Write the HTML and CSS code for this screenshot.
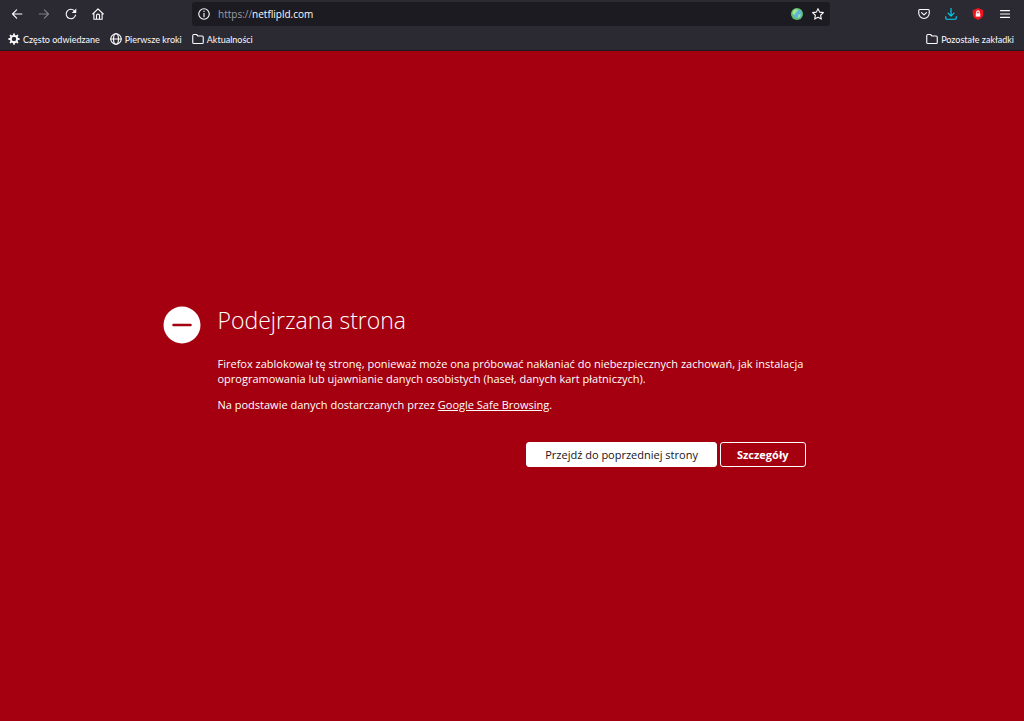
FILE: index.html
```html
<!DOCTYPE html>
<html lang="pl">
<head>
<meta charset="utf-8">
<title>Podejrzana strona</title>
<link rel="stylesheet" href="styles.css">
</head>
<body>
<header class="chrome">
  <div class="toolbar">
    <nav class="tools" aria-label="Nawigacja">
      <button class="tool" aria-label="Wstecz"><svg class="icon" viewBox="0 0 16 16"><path d="M14.500 8H2M7.500 2.500 2 8l5.500 5.500"/></svg></button>
      <button class="tool" aria-label="Do przodu" disabled><svg class="icon" viewBox="0 0 16 16"><path d="M1.500 8H14M8.500 2.500 14 8l-5.500 5.500"/></svg></button>
      <button class="tool" aria-label="Odśwież"><svg class="icon" viewBox="0 0 16 16"><path d="M14 9.500A6.300 6.300 0 1 1 12.300 3.500"/><path class="solid" d="M15 .8v6H9z"/></svg></button>
      <button class="tool" aria-label="Strona startowa"><svg class="icon" viewBox="0 0 16 16"><path d="M1 8 8 1.200 15 8M2.500 7v8h11V7M6 15V9.800q0-1.600 2-1.600t2 1.600V15"/></svg></button>
    </nav>
    <div class="address">
      <svg class="icon" viewBox="0 0 16 16"><circle cx="8" cy="8" r="7"/><path d="M8 7v4.700M8 4v.6"/></svg>
      <div class="url"><span class="scheme">https://</span>netflipld.com</div>
      <svg class="icon globe" viewBox="0 0 16 16"><circle cx="8" cy="8" r="8" fill="#62bf6d"/><circle cx="8.500" cy="8" r="5.800" fill="#5fb4dc"/><path fill="#a5e58e" d="m2.500 4 3-2.500 4 .5-2 3-3 4-2.500-1zM10 9l3-1-1 4-3 1z"/></svg>
      <button class="tool star" aria-label="Dodaj zakładkę"><svg class="icon" viewBox="0 0 16 16"><path d="m8 .9 2.200 4.600 5 .7-3.700 3.500.9 5.100L8 12.300l-4.400 2.500.9-5.100L.8 6.200l5-.7z"/></svg></button>
    </div>
    <div class="tools tools-end">
      <button class="tool" aria-label="Pocket"><svg class="icon" viewBox="0 0 16 16"><path d="M2.300 2h11.400q1.300 0 1.300 1.300V7A7 7 0 0 1 1 7V3.300Q1 2 2.300 2zM4.700 6.200 8 9.200l3.300-3"/></svg></button>
      <button class="tool download" aria-label="Pobrane"><svg class="icon" viewBox="0 0 16 16"><path d="M8 .5v10M4 6.800l4 4 4-4M1 11.500v1.800Q1 15 2.700 15h10.600q1.700 0 1.700-1.700v-1.800"/></svg></button>
      <button class="tool" aria-label="Ochrona"><svg class="icon shield" viewBox="0 0 16 16"><path fill="#f0141e" d="M8 0 15 3v5q0 5-7 8-7-3-7-8V3z"/><path fill="#fff" d="M5 7h6v4.500H5z"/><path class="shackle" d="M6.300 7V5.500a1.700 1.700 0 0 1 3.400 0V7"/></svg></button>
      <button class="tool" aria-label="Menu"><svg class="icon" viewBox="0 0 16 16"><path d="M2 3.500h12M2 8h12M2 12.500h12"/></svg></button>
    </div>
  </div>
  <div class="bookmarks">
    <button class="bookmark"><svg class="icon" viewBox="0 0 16 16"><circle cx="8" cy="8" r="4.300" stroke-width="2.400"/><path stroke-width="2.400" d="M8 1.500v2M8 12.500v2M1.500 8h2M12.500 8h2M3.400 3.400l1.400 1.400M11.200 11.200l1.400 1.400M12.600 3.400l-1.400 1.400M4.800 11.200l-1.400 1.400"/></svg>Często odwiedzane</button>
    <button class="bookmark"><svg class="icon" viewBox="0 0 16 16"><circle cx="8" cy="8" r="7"/><ellipse cx="8" cy="8" rx="3.300" ry="7"/><path d="M1 8h14"/></svg>Pierwsze kroki</button>
    <button class="bookmark"><svg class="icon" viewBox="0 0 16 16"><path d="M1 12.500v-9Q1 2 2.500 2H6l2 2h5.500Q15 4 15 5.500v7q0 1.500-1.500 1.500h-11Q1 14 1 12.500z"/></svg>Aktualności</button>
    <button class="bookmark other"><svg class="icon" viewBox="0 0 16 16"><path d="M1 12.500v-9Q1 2 2.500 2H6l2 2h5.500Q15 4 15 5.500v7q0 1.500-1.500 1.500h-11Q1 14 1 12.500z"/></svg>Pozostałe zakładki</button>
  </div>
</header>
<main class="page">
  <svg class="blocked" viewBox="0 0 38 38" aria-hidden="true"><circle cx="19" cy="19" r="18.500" fill="#fff"/><path d="M10.500 19h17" stroke="#a4000f" stroke-width="2.500" stroke-linecap="round"/></svg>
  <section class="warning">
    <h1>Podejrzana strona</h1>
    <p>Firefox zablokował tę stronę, ponieważ może ona próbować nakłaniać do niebezpiecznych zachowań, jak instalacja oprogramowania lub ujawnianie danych osobistych (haseł, danych kart płatniczych).</p>
    <p>Na podstawie danych dostarczanych przez <a href="#">Google Safe Browsing</a>.</p>
    <div class="actions">
      <button class="action primary">Przejdź do poprzedniej strony</button>
      <button class="action">Szczegóły</button>
    </div>
  </section>
</main>
</body>
</html>
```
FILE: styles.css
```css
* { box-sizing: border-box; }
body {
  margin: 0;
  min-height: 100vh;
  display: flex;
  flex-direction: column;
  background: #a4000f;
  color: #fff;
  font-family: "Open Sans", "Noto Sans", sans-serif;
  font-size: 11px;
}
button {
  font: inherit;
  color: inherit;
  background: none;
  border: 0;
  padding: 0;
}
.chrome {
  background: #2b2a33;
  color: #fbfbfe;
  border-bottom: 1px solid #1a1920;
}
.toolbar {
  display: grid;
  grid-template-columns: 3fr 10fr 3fr;
  height: 28px;
  align-items: center;
}
.tools {
  display: flex;
  gap: 15px;
  padding-left: 11px;
}
.tools-end {
  justify-content: flex-end;
  padding: 0 13px 0 0;
}
.tool {
  display: flex;
  align-items: center;
}
.tool:disabled { opacity: 0.4; }
.icon {
  width: 12px;
  height: 12px;
  flex: none;
  fill: none;
  stroke: currentColor;
  stroke-width: 1.5;
  stroke-linecap: round;
  stroke-linejoin: round;
}
.solid { fill: currentColor; stroke: none; }
.globe, .shield { stroke: none; }
.shackle { stroke: #fff; }
.download { color: #00d4f5; }
.address {
  display: flex;
  align-items: center;
  height: 24px;
  margin-right: 2px;
  padding: 0 6px;
  border-radius: 3px;
  background: #1c1b22;
  font-size: 10px;
}
.url { flex: 1; padding-left: 8px; }
.scheme { color: #a09fa6; }
.star { margin-left: 9px; }
.bookmarks {
  display: flex;
  align-items: center;
  gap: 10px;
  height: 22px;
  padding: 0 10px 0 8px;
  font-family: Lato, "Open Sans", sans-serif;
  font-size: 9px;
}
.bookmark {
  display: flex;
  align-items: center;
  gap: 3px;
  white-space: nowrap;
}
.other { margin-left: auto; }
.page {
  flex: 1;
  display: grid;
  grid-template-columns: 1fr minmax(0, 589px) 1fr;
  align-content: center;
}
.blocked {
  width: 38px;
  height: 38px;
  justify-self: end;
  margin-right: 17px;
}
h1 {
  margin: 0 0 22px;
  font-size: 23px;
  line-height: 28px;
  font-weight: 300;
}
p {
  margin: 0 0 11px;
  line-height: 15px;
}
a { color: inherit; }
.actions {
  display: flex;
  justify-content: flex-end;
  gap: 3px;
  margin: 30px 1px 0 0;
}
.action {
  height: 25px;
  padding: 0 16px;
  border: 1px solid #fff;
  border-radius: 3px;
  font-weight: 700;
}
.primary {
  padding: 0 18px;
  background: #fff;
  color: #15141a;
  font-weight: 400;
}
```
